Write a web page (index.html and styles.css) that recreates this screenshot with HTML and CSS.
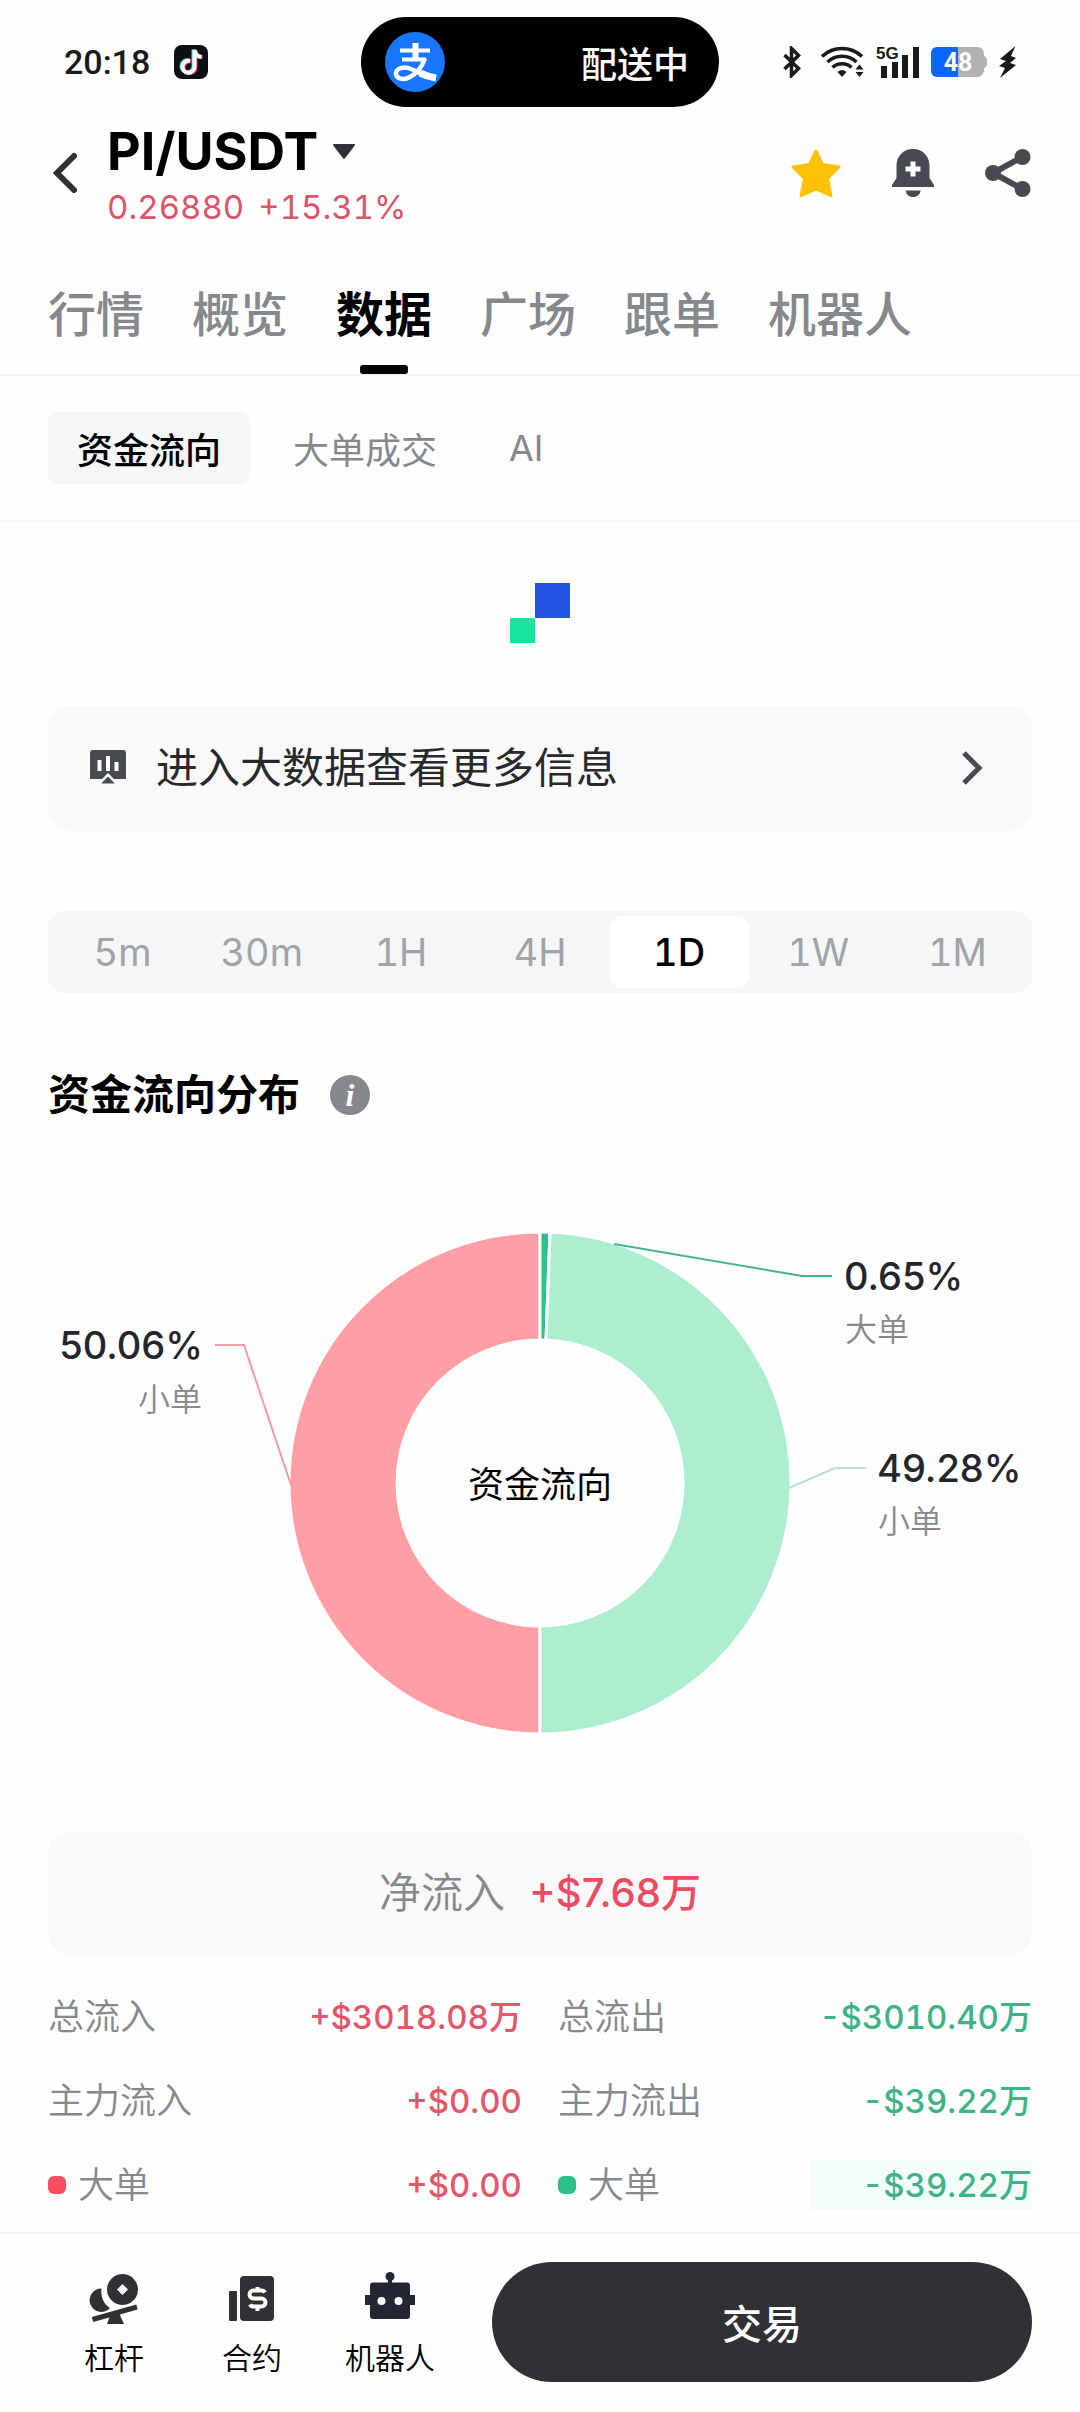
FILE: index.html
```html
<!DOCTYPE html>
<html lang="zh-CN">
<head>
<meta charset="utf-8">
<meta name="viewport" content="width=device-width, initial-scale=1">
<title>PI/USDT</title>
<link rel="stylesheet" href="styles.css">
</head>
<body>
<div class="status">
  <div class="status-left">
    <span class="clock">20:18</span>
    <svg width="34" height="34" viewBox="0 0 34 34" aria-hidden="true">
      <rect width="34" height="34" rx="8" fill="#0d0f17"/>
      <g fill="none" stroke-width="4">
        <path d="M15 15.500a6 6 0 1 0 4.500 6V4.500c.5 4.500 3.500 7 7.500 7.300" stroke="#3fe8e0"/>
        <path d="M17 16.500a6 6 0 1 0 4.500 6V5.500c.5 4.500 3 6.500 7 6.800" stroke="#f5335c"/>
        <path d="M16 16a6 6 0 1 0 4.500 6V5c.5 4.500 3 6.500 7 7" stroke="#fff"/>
      </g>
    </svg>
  </div>
  <div class="island">
    <svg width="60" height="60" viewBox="0 0 60 60" aria-hidden="true">
      <circle cx="30" cy="30" r="30" fill="#1876ff"/>
      <g fill="none" stroke="#fff" stroke-linecap="butt">
        <path d="M15 18.500h30" stroke-width="4"/>
        <path d="M30.500 11v16" stroke-width="6"/>
        <path d="M17 27.500h24" stroke-width="4"/>
        <path d="M40 26.500c-3 8-8 15-15 18.500-7 4-14 1.500-14-3.500 0-5.500 8-7.500 15-4.500 8 3.500 15 7.500 25 9" stroke-width="4.500"/>
        <path d="M35 41c5 2.500 10 4 16 5" stroke-width="7"/>
      </g>
    </svg>
    <span>配送中</span>
  </div>
  <div class="status-right">
    <svg class="bt" width="18" height="32" viewBox="0 0 18 32" aria-hidden="true">
      <path d="M1.500 9l14 13.500-7 7V2.500l7 7L1.500 23" fill="none" stroke="#1a1a1a" stroke-width="3.500"/>
    </svg>
    <svg class="wifi" width="44" height="32" viewBox="0 0 44 32" aria-hidden="true">
      <g fill="none" stroke="#1a1a1a" stroke-width="3.500">
        <path d="M1 10.500a29 29 0 0 1 40 0"/>
        <path d="M6.500 16a21 21 0 0 1 29 0"/>
        <path d="M11.500 21.500a14 14 0 0 1 19 0"/>
      </g>
      <path d="M21 31l-4.500-5q4.500-4 9 0zM38.500 18.500l4 5h-8zM38.500 31l4-5h-8z" fill="#1a1a1a"/>
    </svg>
    <svg class="cell" width="44" height="44" viewBox="0 -6 44 44" aria-hidden="true">
      <text class="cell-label" x="0" y="13">5G</text>
      <path d="M5 20h6v12H5zM16 16h6v16h-6zM26 9h6v23h-6zM37 1h6v31h-6z" fill="#1a1a1a"/>
    </svg>
    <svg class="batt" width="56" height="30" viewBox="0 0 56 30" aria-hidden="true">
      <path d="M27 0h20a7 7 0 0 1 6 7v2q3 1 3 4v4q0 3-3 4v2a7 7 0 0 1-6 7H27z" fill="#b1b1b1"/>
      <path d="M27 0H6a6 6 0 0 0-6 6v18a6 6 0 0 0 6 6h21z" fill="#0966ff"/>
      <text class="batt-label" x="27" y="24" text-anchor="middle">48</text>
    </svg>
    <svg class="bolt" width="20" height="32" viewBox="0 0 20 32" aria-hidden="true">
      <path d="M17.500 0L2 13l6 2-7 5 6 2-5 10 16-13-6-2 6-5-5-2z" fill="#1a1a1a"/>
    </svg>
  </div>
</div>

<header class="header">
  <button class="icon-btn back" type="button" aria-label="返回">
    <svg width="24" height="40" viewBox="0 0 24 40"><path d="M21 3L4 20l17 17" fill="none" stroke="#303134" stroke-width="6" stroke-linecap="round"/></svg>
  </button>
  <div class="pair">
    <button class="pair-name" type="button">PI/USDT
      <svg width="24" height="16" viewBox="0 0 24 16" aria-hidden="true"><path d="M2 1h20L12 14z" fill="#303134" stroke="#303134" stroke-width="2" stroke-linejoin="round"/></svg>
    </button>
    <p class="price"><span>0.26880</span><span>+15.31%</span></p>
  </div>
  <div class="actions">
    <button class="icon-btn" type="button" aria-label="收藏">
      <svg width="50" height="50" viewBox="0 0 50 50"><path d="M25 3l6.500 13.500L48 19 36.500 30.500 40 47.500 25 41 10 47.500l3.500-17L2 19l16.500-2.500z" fill="#ffc107" stroke="#ffc107" stroke-width="3" stroke-linejoin="round"/></svg>
    </button>
    <button class="icon-btn" type="button" aria-label="提醒">
      <svg width="42" height="50" viewBox="0 0 42 50"><path d="M21 1C11 1 4.500 8.500 4.500 18v12L0 37v2h42v-2l-4.500-7V18C37.500 8.500 31 1 21 1zM14 42.500h14.500c0 4-3.500 6.500-7.500 6.500s-7-2.500-7-6.500z" fill="#474a50"/><path d="M21 13.500v15M13.500 21h15" stroke="#fff" stroke-width="5"/></svg>
    </button>
    <button class="icon-btn" type="button" aria-label="分享">
      <svg width="46" height="50" viewBox="0 0 46 50"><path d="M37.500 9L8 25l29.500 16" fill="none" stroke="#474a50" stroke-width="6"/><g fill="#474a50"><circle cx="37.500" cy="9" r="8"/><circle cx="8" cy="25" r="8"/><circle cx="37.500" cy="41" r="8"/></g></svg>
    </button>
  </div>
</header>

<nav class="tabs">
  <a class="tab" href="#quote">行情</a>
  <a class="tab" href="#overview">概览</a>
  <a class="tab is-active" href="#data" aria-current="page">数据</a>
  <a class="tab" href="#plaza">广场</a>
  <a class="tab" href="#copy">跟单</a>
  <a class="tab" href="#bots">机器人</a>
</nav>
<nav class="chips">
  <button class="chip is-active" type="button">资金流向</button>
  <button class="chip" type="button">大单成交</button>
  <button class="chip" type="button">AI</button>
</nav>

<main class="main">
  <svg class="loader" width="60" height="60" viewBox="0 0 60 60" aria-hidden="true">
    <rect x="25" width="35" height="35" fill="#2354e6"/>
    <rect y="35" width="25" height="25" fill="#16e5a2"/>
  </svg>

  <a class="more" href="#bigdata">
    <svg width="36" height="38" viewBox="0 0 36 38" aria-hidden="true">
      <path d="M3 1h30a3 3 0 0 1 3 3v26H24l-6-6-6 6H0V4a3 3 0 0 1 3-3z" fill="#474a50"/>
      <path d="M9.500 11v11M18 7v15M26.500 13v9" stroke="#fff" stroke-width="4"/>
      <path d="M18 26l9 9.500H9z" fill="#474a50" stroke="#f9f9f9" stroke-width="2"/>
    </svg>
    <span class="more-text">进入大数据查看更多信息</span>
    <svg width="22" height="34" viewBox="0 0 22 34" aria-hidden="true"><path d="M3 2l15 15L3 32" fill="none" stroke="#474a50" stroke-width="5"/></svg>
  </a>

  <div class="ranges">
    <button class="range" type="button">5m</button>
    <button class="range" type="button">30m</button>
    <button class="range" type="button">1H</button>
    <button class="range" type="button">4H</button>
    <button class="range is-active" type="button">1D</button>
    <button class="range" type="button">1W</button>
    <button class="range" type="button">1M</button>
  </div>

  <div class="section-head">
    <h2 class="section-title">资金流向分布</h2>
    <button class="info" type="button" aria-label="说明">i</button>
  </div>
</main>

<svg class="chart" viewBox="0 0 1080 660" role="img" aria-label="资金流向分布">
  <g stroke="#fff" stroke-width="3">
    <path d="M540 107A251 251 0 0 0 540 609V501A143 143 0 0 1 540 215z" fill="#ff9ea4"/>
    <path d="M540 107A251 251 0 0 1 550 107L546 215A143 143 0 0 0 540 215z" fill="#2cc08a"/>
    <path d="M550 107A251 251 0 0 1 791 358A251 251 0 0 1 540 609V501A143 143 0 0 0 683 358A143 143 0 0 0 546 215z" fill="#aeeed0"/>
  </g>
  <g fill="none" stroke-width="2">
    <path d="M614 119L802 151h30" stroke="#45b68b"/>
    <path d="M789 363L835 343h31" stroke="#b4e3cd"/>
    <path d="M291 360L244 220h-29" stroke="#f39ba5"/>
  </g>
  <text class="chart-center" x="540" y="373" text-anchor="middle">资金流向</text>
  <text class="chart-value" x="203" y="234" text-anchor="end">50.06%</text>
  <text class="chart-name" x="202" y="286" text-anchor="end">小单</text>
  <text class="chart-value" x="844" y="165">0.65%</text>
  <text class="chart-name" x="845" y="216">大单</text>
  <text class="chart-value" x="877" y="357">49.28%</text>
  <text class="chart-name" x="878" y="408">小单</text>
</svg>

<section class="summary">
  <p class="net"><span class="net-label">净流入</span><span class="net-value">+$7.68万</span></p>
  <dl class="flows">
    <div class="flow"><dt>总流入</dt><dd class="in">+$3018.08万</dd></div>
    <div class="flow"><dt>总流出</dt><dd class="out">-$3010.40万</dd></div>
    <div class="flow"><dt>主力流入</dt><dd class="in">+$0.00</dd></div>
    <div class="flow"><dt>主力流出</dt><dd class="out">-$39.22万</dd></div>
    <div class="flow"><dt><i class="dot dot-in"></i>大单</dt><dd class="in">+$0.00</dd></div>
    <div class="flow"><dt><i class="dot dot-out"></i>大单</dt><dd class="out is-changed">-$39.22万</dd></div>
  </dl>
</section>

<footer class="bar">
  <nav class="bar-links">
    <a class="bar-link" href="#margin">
      <svg width="50" height="52" viewBox="0 0 50 52" aria-hidden="true">
        <path d="M12.500 16.500c-1 8 2 15.500 8.500 19.500A11.700 11.700 0 1 1 12.500 16.500z" fill="#303134"/>
        <path fill-rule="evenodd" d="M33.500 2a15.500 15.500 0 1 0 .01 0zM33.500 12l5.500 5.500-5.500 5.500-5.500-5.500z" fill="#303134"/>
        <path d="M3.500 47.500L48 35" stroke="#303134" stroke-width="5"/>
        <path d="M22 41h8l5 11H18z" fill="#303134"/>
      </svg>
      <span>杠杆</span>
    </a>
    <a class="bar-link" href="#futures">
      <svg width="50" height="52" viewBox="0 0 50 52" aria-hidden="true">
        <rect x="2" y="19" width="8" height="30" rx="1" fill="#303134"/>
        <rect x="13" y="4" width="34" height="45" rx="4" fill="#303134"/>
        <path d="M38 20.500q-1-2-4-2h-7.500a4 4 0 0 0 0 8h8a4 4 0 0 1 0 8H27q-3 0-4-2M30.500 15v3M30.500 34v5" fill="none" stroke="#fff" stroke-width="4"/>
      </svg>
      <span>合约</span>
    </a>
    <a class="bar-link" href="#robot">
      <svg width="50" height="52" viewBox="0 0 50 52" aria-hidden="true">
        <g fill="#242733"><circle cx="25" cy="4.500" r="4.500"/><path d="M23 6h4v7h-4zM8 10.500h34a3 3 0 0 1 3 3V23h5v10h-5v11a3 3 0 0 1-3 3H8a3 3 0 0 1-3-3V33H0V23h5v-9.500a3 3 0 0 1 3-3z"/></g>
        <circle cx="16.500" cy="29" r="4" fill="#fff"/><circle cx="33.500" cy="29" r="4" fill="#fff"/>
      </svg>
      <span>机器人</span>
    </a>
  </nav>
  <button class="trade" type="button">交易</button>
</footer>
</body>
</html>
```
FILE: styles.css
```css
* { box-sizing: border-box; }

body {
  margin: 0;
  min-height: 100vh;
  display: flex;
  flex-direction: column;
  background: #fefefe;
  color: #000;
  font-family: Inter, "Noto Sans CJK SC", sans-serif;
}

p, h2, dl, dd { margin: 0; }
svg { display: block; flex: none; }
a { color: inherit; text-decoration: none; }
button { padding: 0; border: 0; background: none; color: inherit; font: inherit; }

/* status bar */
.status {
  display: grid;
  grid-template-columns: 1fr 358px 1fr;
  align-items: center;
  height: 120px;
  padding-top: 4px;
}
.status-left { display: flex; align-items: center; gap: 24px; padding-left: 64px; }
.clock { font: 500 34px/40px Roboto, sans-serif; color: #1a1a1a; }
.island {
  display: flex;
  align-items: center;
  justify-content: space-between;
  height: 90px;
  padding: 0 30px 0 24px;
  border-radius: 45px;
  background: #000;
  color: #fff;
  font-size: 36px;
  font-weight: 500;
}
.status-right { display: flex; align-items: center; justify-content: flex-end; gap: 11px; padding-right: 62px; }
.wifi { margin-left: 9px; }
.cell-label { font: 700 17px "Liberation Sans Narrow", "Liberation Sans", sans-serif; fill: #1a1a1a; }
.batt-label { font: 700 25px Roboto, sans-serif; fill: #fff; }

/* pair header */
.header { display: flex; align-items: center; padding: 0 49px 0 53px; }
.icon-btn { display: block; }
.pair { margin-left: 30px; flex: 1; }
.pair-name { display: flex; align-items: center; gap: 14px; font-size: 52px; font-weight: 700; line-height: 64px; }
.price { display: flex; gap: 14px; margin-top: 4px; font-size: 33px; line-height: 38px; color: #dc5468; font-variant-numeric: tabular-nums; }
.actions { display: flex; gap: 51px; }

/* tabs */
.tabs { display: flex; gap: 48px; padding: 58px 48px 0; border-bottom: 2px solid #f2f3f4; }
.tab { position: relative; height: 90px; font-size: 48px; font-weight: 500; line-height: 62px; color: #85888c; }
.tab.is-active { color: #000; font-weight: 700; }
.tab.is-active::after {
  content: "";
  position: absolute;
  left: 50%;
  bottom: 0;
  width: 48px;
  height: 9px;
  margin-left: -24px;
  border-radius: 3px;
  background: #000;
}
.chips { display: flex; gap: 14px; padding: 36px 48px; border-bottom: 2px solid #f5f6f6; }
.chip { height: 72px; padding: 0 29px; border-radius: 10px; font-size: 36px; color: #85888c; }
.chip.is-active { background: #f4f6f7; color: #000; font-weight: 500; }

/* content */
.main { padding: 61px 48px 0; }
.loader { margin: 0 auto; }
.more {
  display: flex;
  align-items: center;
  margin-top: 63px;
  padding: 32px 49px 33px 42px;
  border-radius: 22px;
  background: #f9f9f9;
  color: #26282c;
  font-size: 42px;
  line-height: 60px;
}
.more-text { flex: 1; margin-left: 30px; }
.ranges { display: flex; margin-top: 80px; padding: 5px; border-radius: 16px; background: #f4f6f7; }
.range { flex: 1; height: 72px; border-radius: 12px; font-size: 38px; color: #a0a3a7; font-variant-numeric: tabular-nums; }
.range.is-active { background: #fff; color: #000; font-weight: 500; }
.section-head { display: flex; align-items: center; gap: 30px; margin-top: 72px; }
.section-title { font-size: 42px; font-weight: 700; line-height: 60px; }
.info {
  width: 40px;
  height: 40px;
  border-radius: 50%;
  background: #85888c;
  color: #fff;
  font: italic 700 32px/38px "Liberation Serif", serif;
}

.chart { width: 100%; height: auto; }
.chart-center { font-size: 36px; }
.chart-value { font-size: 38px; font-weight: 500; fill: #24262b; }
.chart-name { font-size: 32px; font-weight: 350; fill: #85888c; }

/* totals */
.summary { padding: 46px 48px 0; }
.net {
  display: flex;
  align-items: center;
  justify-content: center;
  gap: 24px;
  padding: 32px 0;
  border-radius: 22px;
  background: #f9f9f9;
  line-height: 60px;
}
.net-label { font-size: 42px; font-weight: 350; color: #85888c; }
.net-value { font-size: 40px; font-weight: 500; color: #ea4d61; }
.flows { display: grid; grid-template-columns: 1fr 1fr; column-gap: 36px; padding-top: 20px; }
.flow { display: flex; align-items: center; justify-content: space-between; height: 84px; }
.flow dt { display: flex; align-items: center; gap: 12px; font-size: 36px; line-height: 48px; font-weight: 350; color: #85888c; }
.flow dd { font-size: 33px; font-weight: 500; line-height: 50px; font-variant-numeric: tabular-nums; }
.in { color: #e4566a; }
.out { color: #3cb488; }
.flow .is-changed { padding-left: 52px; border-radius: 4px; background: #f3fcf8; }
.dot { width: 18px; height: 18px; border-radius: 6px; }
.dot-in { background: #f94d62; }
.dot-out { background: #2cc08a; }

/* bottom bar */
.bar {
  position: sticky;
  bottom: 0;
  display: flex;
  align-items: center;
  gap: 33px;
  margin-top: auto;
  padding: 28px 48px 30px 45px;
  border-top: 2px solid #f2f3f4;
  background: #fefefe;
}
.bar-links { display: grid; grid-template-columns: repeat(3, 138px); padding-top: 8px; }
.bar-link { display: flex; flex-direction: column; align-items: center; gap: 12px; font-size: 30px; font-weight: 350; line-height: 44px; }
.trade { flex: 1; height: 120px; border-radius: 60px; background: #303134; color: #fff; font-size: 40px; font-weight: 500; }
```
